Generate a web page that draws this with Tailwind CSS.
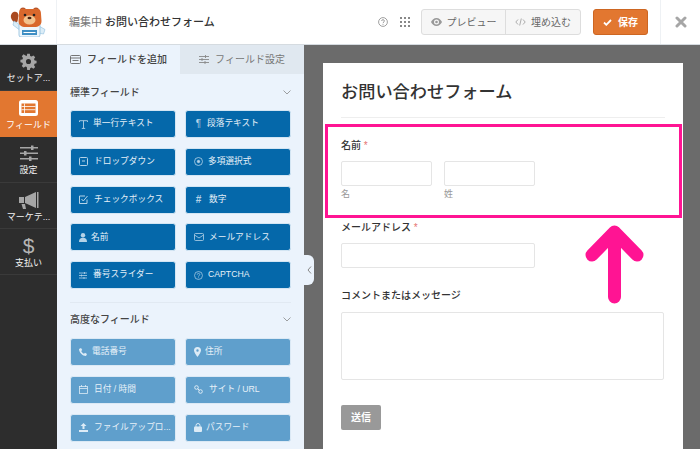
<!DOCTYPE html>
<html lang="ja">
<head>
  <meta charset="UTF-8" />
  <title>お問い合わせフォーム</title>
  <script src="https://cdn.jsdelivr.net/npm/@tailwindcss/browser@4"></script>
</head>
<body class="w-[700px] h-[449px] overflow-hidden relative bg-white font-['Liberation_Sans','Noto_Sans_CJK_JP',sans-serif]">
  <!-- header -->
  <header class="h-[45px] flex items-center bg-white border-b border-[#d5dbe0]">
    <div class="w-[57px] h-full flex items-center justify-center border-r border-[#eef1f4]">
      <svg width="38" height="30" viewBox="0 0 38 30">
        <path d="M3 13c-2.500-4-.5-7 1.500-8 2.500-1 5 .5 5 3.500l-1 6-3 1.500z" fill="#a9491f"/>
        <path d="M5 14l8 5-1 5-8-6z" fill="#dcedf7" stroke="#8dbedd" stroke-width="0.6"/>
        <path d="M30 19l6 3.500-1.500 4.500-5-1z" fill="#dcedf7" stroke="#8dbedd" stroke-width="0.6"/>
        <rect x="10" y="16" width="21" height="14" rx="2" fill="#eef6fb" stroke="#8dbedd" stroke-width="0.8"/>
        <circle cx="14" cy="3.500" r="3" fill="#b8562a"/><circle cx="27" cy="3.500" r="3" fill="#b8562a"/>
        <path d="M12 2h17c2 0 3 2 3 5l.5 7c0 4-3 6-7 6h-9c-4 0-7-2-7-6l.5-7c0-3 .5-5 2-5z" fill="#d9682c"/>
        <ellipse cx="20.500" cy="13" rx="6" ry="4.500" fill="#f3c28d"/>
        <circle cx="16" cy="8" r="1.300" fill="#222"/><circle cx="25" cy="8" r="1.300" fill="#222"/>
        <ellipse cx="20.500" cy="11" rx="2" ry="1.300" fill="#4a2212"/>
        <rect x="13" y="23" width="15" height="5" fill="#3f8fc4"/>
        <path d="M14.500 25.500h12" stroke="#fff" stroke-width="1"/>
      </svg>
    </div>
    <div class="ml-[12px] text-[11px] text-[#777] leading-none">編集中 <span class="text-[#333] font-medium">お問い合わせフォーム</span></div>
    <div class="ml-auto flex items-center h-full">
      <svg class="w-[10px] h-[10px] mr-[12px]" viewBox="0 0 10 10" fill="none" stroke="#888" stroke-width="0.8"><circle cx="5" cy="5" r="4.400"/><path d="M3.600 4c0-1.800 2.800-1.800 2.800 0 0 1-1.400 1-1.400 2.200M5 7.200v.8"/></svg>
      <svg class="w-[10px] h-[10px] mr-[11px]" viewBox="0 0 10 10" fill="#888"><rect x="0" y="0" width="2" height="2"/><rect x="4" y="0" width="2" height="2"/><rect x="8" y="0" width="2" height="2"/><rect x="0" y="4" width="2" height="2"/><rect x="4" y="4" width="2" height="2"/><rect x="8" y="4" width="2" height="2"/><rect x="0" y="8" width="2" height="2"/><rect x="4" y="8" width="2" height="2"/><rect x="8" y="8" width="2" height="2"/></svg>
      <div class="w-[160px] h-[26px] flex bg-[#f6f6f6] border border-[#dddddd] rounded-[3px] text-[10px] text-[#666]">
        <div class="w-[84px] flex items-center justify-center gap-[5px] border-r border-[#dddddd]">
          <svg class="w-[11px] h-[8px]" viewBox="0 0 11 8" fill="#999"><path d="M5.500 0C3 0 1 1.700 0 4c1 2.300 3 4 5.500 4S10 6.300 11 4C10 1.700 8 0 5.500 0zm0 6.500a2.500 2.500 0 1 1 0-5 2.500 2.500 0 0 1 0 5z"/><circle cx="5.500" cy="4" r="1.300"/></svg>
          プレビュー
        </div>
        <div class="flex-1 flex items-center justify-center gap-[5px]">
          <svg class="w-[11px] h-[8px]" viewBox="0 0 11 8" fill="none" stroke="#999" stroke-width="0.8"><path d="M3 1.500L.8 4 3 6.500M8 1.500L10.200 4 8 6.500M6.300.500L4.700 7.500"/></svg>
          埋め込む
        </div>
      </div>
      <div class="ml-[12px] w-[55px] h-[26px] flex items-center justify-center gap-[6px] bg-[#e27730] border border-[#cd6622] rounded-[3px] text-white text-[10px] font-bold">
        <svg class="w-[9px] h-[7px]" viewBox="0 0 9 7" fill="none" stroke="#fff" stroke-width="1.800"><path d="M1 3.500L3.300 5.800 8 1"/></svg>
        保存
      </div>
      <div class="ml-[12px] w-[40px] h-full flex items-center justify-center border-l border-[#eef1f4]">
        <svg class="w-[12px] h-[12px]" viewBox="0 0 12 12" stroke="#a6a6a6" stroke-width="3" stroke-linecap="round"><path d="M2 2l8 8M10 2l-8 8"/></svg>
      </div>
    </div>
  </header>

  <div class="flex h-[404px]">
    <!-- sidebar -->
    <nav class="w-[57px] bg-[#2d2d2d] text-[#f2f2f2] text-[9px] text-center shrink-0">
      <div class="h-[46px] flex flex-col items-center justify-center gap-[4px] pt-[1px] border-b border-[#3a3a3a]">
        <svg class="w-[17px] h-[17px]" viewBox="-1 -1 20 20" fill="#a6a6a6"><path fill-rule="evenodd" d="M7.500 0h3l.5 2.500 1.600.7 2.200-1.400 2.100 2.100-1.400 2.200.7 1.600 2.300.5v3l-2.300.5-.7 1.600 1.400 2.200-2.100 2.100-2.200-1.400-1.600.7-.5 2.400h-3L7 15.600l-1.600-.7-2.200 1.400-2.100-2.100 1.400-2.200-.7-1.600L-.5 10V7l2.300-.5.700-1.600-1.400-2.200 2.100-2.100 2.200 1.400L7 2.500zM9 6a3 3 0 1 0 0 6 3 3 0 0 0 0-6z"/></svg>
        <span class="leading-none">セットア...</span>
      </div>
      <div class="h-[46px] flex flex-col items-center justify-center gap-[5px] pt-[1px] bg-[#e27730] text-white">
        <svg class="w-[19px] h-[16px]" viewBox="0 0 19 16"><rect width="19" height="16" rx="2.500" fill="#fff"/><rect x="2.500" y="3.500" width="14" height="9.500" fill="#e27730"/><path d="M2.500 6.500h14M2.500 9.700h14M5.500 3.500V13" stroke="#fff" stroke-width="0.8"/></svg>
        <span class="leading-none">フィールド</span>
      </div>
      <div class="h-[46px] flex flex-col items-center justify-center gap-[5px] pt-[1px] border-b border-[#3a3a3a]">
        <svg class="w-[18px] h-[16px]" viewBox="0 0 18 16" fill="#a6a6a6"><rect y="2" width="18" height="1.500"/><rect y="7.500" width="18" height="1.500"/><rect y="13" width="18" height="1.500"/><rect x="11" y="0.500" width="2.500" height="4.500"/><rect x="4" y="6" width="2.500" height="4.500"/><rect x="9" y="11.500" width="2.500" height="4.500"/></svg>
        <span class="leading-none">設定</span>
      </div>
      <div class="h-[46px] flex flex-col items-center justify-center gap-[4px] pt-[1px] border-b border-[#3a3a3a]">
        <svg class="w-[20px] h-[18px]" viewBox="0 0 20 18" fill="#a6a6a6"><path d="M0 6h5v6H0zM6 6l11-5v16L6 12zM18 1h1.500v16H18zM2.500 13H6l1 5H4z"/></svg>
        <span class="leading-none">マーケテ...</span>
      </div>
      <div class="h-[46px] flex flex-col items-center justify-center gap-[4px] pt-[1px] border-b border-[#3a3a3a]">
        <span class="text-[21px] leading-[19px] text-[#b5b5b5]">$</span>
        <span class="leading-none">支払い</span>
      </div>
    </nav>

    <!-- fields panel -->
    <aside class="w-[247px] shrink-0 bg-[#ebf3fc] flex flex-col">
      <div class="h-[29px] flex text-[10px] leading-none shrink-0">
        <div class="w-[123px] flex items-center justify-center gap-[6px] text-[#444] font-medium">
          <svg class="w-[11px] h-[9px]" viewBox="0 0 11 9" fill="none" stroke="#666" stroke-width="0.9"><rect x=".5" y=".5" width="10" height="8" rx="1"/><path d="M.5 3h10M2.500 5.500h6"/></svg>
          フィールドを追加
        </div>
        <div class="flex-1 flex items-center justify-center gap-[6px] bg-[#e0e8f0] text-[#777]">
          <svg class="w-[10px] h-[9px]" viewBox="0 0 10 9" fill="none" stroke="#888" stroke-width="0.9"><path d="M0 1.500h10M0 4.500h10M0 7.500h10M6.500 0v3M3 3v3M6 6v3"/></svg>
          フィールド設定
        </div>
      </div>

      <div class="flex items-center justify-between pl-[13px] pr-[13px] h-[36px] text-[10px] font-medium text-[#444]">
        <span>標準フィールド</span>
        <svg class="w-[8px] h-[5px]" viewBox="0 0 8 5" fill="none" stroke="#888" stroke-width="0.8"><path d="M.5.500L4 4 7.500.500"/></svg>
      </div>
      <div class="grid grid-cols-[106px_106px] gap-x-[9px] gap-y-[9.75px] px-[13px] text-[8.7px] text-[#e6f0f8] whitespace-nowrap">
        <div class="h-[28px] flex items-center gap-[5px] pl-[8px] bg-[#0568aa] border border-[#d3e5f3] rounded-[3px]"><svg class="w-[9px] h-[9px] shrink-0" viewBox="0 0 9 9" fill="none" stroke="#b5d3e8" stroke-width="0.9"><path d="M.5 2V.7h8V2M4.500.7v7.600M2.800 8.400h3.400"/></svg>単一行テキスト</div>
        <div class="h-[28px] flex items-center gap-[4px] pl-[8px] bg-[#0568aa] border border-[#d3e5f3] rounded-[3px]"><span class="w-[9px] text-center text-[10px] leading-none text-[#b5d3e8]">¶</span>段落テキスト</div>
        <div class="h-[28px] flex items-center gap-[6px] pl-[8px] bg-[#0568aa] border border-[#d3e5f3] rounded-[3px]"><svg class="w-[9px] h-[9px] shrink-0" viewBox="0 0 9 9" fill="none" stroke="#b5d3e8"><rect x=".5" y=".5" width="8" height="8" rx="1"/><path d="M3 4h3"/></svg>ドロップダウン</div>
        <div class="h-[28px] flex items-center gap-[5px] pl-[8px] bg-[#0568aa] border border-[#d3e5f3] rounded-[3px]"><svg class="w-[9px] h-[9px] shrink-0" viewBox="0 0 9 9" fill="none" stroke="#b5d3e8" stroke-width="0.8"><circle cx="4.500" cy="4.500" r="4"/><circle cx="4.500" cy="4.500" r="1.200" fill="#b5d3e8"/></svg>多項選択式</div>
        <div class="h-[28px] flex items-center gap-[6px] pl-[8px] bg-[#0568aa] border border-[#d3e5f3] rounded-[3px]"><svg class="w-[9px] h-[9px] shrink-0" viewBox="0 0 9 9" fill="none" stroke="#b5d3e8"><path d="M8 4.500V8.500H.5V1H6"/><path d="M2.500 4L4.300 6 8.500 1"/></svg>チェックボックス</div>
        <div class="h-[28px] flex items-center gap-[6px] pl-[8px] bg-[#0568aa] border border-[#d3e5f3] rounded-[3px]"><span class="w-[9px] text-center text-[10px] font-bold leading-none text-[#b5d3e8]">#</span>数字</div>
        <div class="h-[28px] flex items-center gap-[4px] pl-[8px] bg-[#0568aa] border border-[#d3e5f3] rounded-[3px]"><svg class="w-[8px] h-[9px] shrink-0" viewBox="0 0 8 9" fill="#b5d3e8"><circle cx="4" cy="2.200" r="2.200"/><path d="M0 9c0-3 1.500-4.300 4-4.300S8 6 8 9z"/></svg>名前</div>
        <div class="h-[28px] flex items-center gap-[5px] pl-[8px] bg-[#0568aa] border border-[#d3e5f3] rounded-[3px]"><svg class="w-[10px] h-[8px] shrink-0" viewBox="0 0 10 8" fill="none" stroke="#b5d3e8" stroke-width="0.8"><rect x=".5" y=".5" width="9" height="7" rx="1"/><path d="M.5 2L5 5 9.500 2"/></svg>メールアドレス</div>
        <div class="h-[28px] flex items-center gap-[6px] pl-[8px] bg-[#0568aa] border border-[#d3e5f3] rounded-[3px]"><svg class="w-[8px] h-[7px] shrink-0" viewBox="0 0 8 7" fill="none" stroke="#b5d3e8" stroke-width="0.8"><path d="M0 1h8M0 3.500h8M0 6h8M5.500 0v2M2.500 2.500v2M5 5v2"/></svg>番号スライダー</div>
        <div class="h-[28px] flex items-center gap-[5px] pl-[8px] bg-[#0568aa] border border-[#d3e5f3] rounded-[3px]"><svg class="w-[9px] h-[9px] shrink-0" viewBox="0 0 10 10" fill="none" stroke="#b5d3e8" stroke-width="0.8"><circle cx="5" cy="5" r="4.400"/><path d="M3.600 4c0-1.800 2.800-1.800 2.800 0 0 1-1.400 1-1.400 2.200M5 7.200v.8"/></svg>CAPTCHA</div>
      </div>

      <div class="mx-[13px] mt-[13px] border-t border-[#e1e9f2]"></div>

      <div class="flex items-center justify-between pl-[13px] pr-[13px] pb-[3px] h-[35px] text-[10px] font-medium text-[#444]">
        <span>高度なフィールド</span>
        <svg class="w-[8px] h-[5px]" viewBox="0 0 8 5" fill="none" stroke="#888" stroke-width="0.8"><path d="M.5.500L4 4 7.500.500"/></svg>
      </div>
      <div class="grid grid-cols-[106px_106px] gap-x-[9px] gap-y-[9.75px] px-[13px] text-[8.7px] text-[#e6f0f8] whitespace-nowrap">
        <div class="h-[28px] flex items-center gap-[5px] pl-[8px] bg-[#5f9fcc] border border-[#dbe9f5] rounded-[3px]"><svg class="w-[8px] h-[8px] shrink-0" viewBox="0 0 8 8" fill="#dcebf6"><path d="M0 1l2-1 1.300 2L2.200 3c.5 1.200 1.300 2 2.800 2.800L6 4.700 8 6 7 8C3.500 8 0 4.500 0 1z"/></svg>電話番号</div>
        <div class="h-[28px] flex items-center gap-[4px] pl-[8px] bg-[#5f9fcc] border border-[#dbe9f5] rounded-[3px]"><svg class="w-[7px] h-[10px] shrink-0" viewBox="0 0 7 10" fill="#dcebf6"><path fill-rule="evenodd" d="M3.500 0a3.500 3.500 0 0 1 3.500 3.500C7 5.500 3.500 10 3.500 10S0 5.500 0 3.500A3.500 3.500 0 0 1 3.500 0zm0 2.300a1.200 1.200 0 1 0 0 2.400 1.200 1.200 0 0 0 0-2.400z"/></svg>住所</div>
        <div class="h-[28px] flex items-center gap-[6px] pl-[8px] bg-[#5f9fcc] border border-[#dbe9f5] rounded-[3px]"><svg class="w-[9px] h-[9px] shrink-0" viewBox="0 0 9 9" fill="none" stroke="#dcebf6" stroke-width="0.8"><rect x=".5" y="1.500" width="8" height="7"/><path d="M.5 3.500h8M2.500 0v2M6.500 0v2"/></svg>日付 / 時間</div>
        <div class="h-[28px] flex items-center gap-[6px] pl-[8px] bg-[#5f9fcc] border border-[#dbe9f5] rounded-[3px]"><svg class="w-[9px] h-[9px] shrink-0" viewBox="0 0 9 9" fill="none" stroke="#dcebf6"><circle cx="2.500" cy="2.500" r="1.800"/><circle cx="6.500" cy="6.500" r="1.800"/><path d="M3.500 3.500l2 2"/></svg>サイト / URL</div>
        <div class="h-[28px] flex items-center gap-[6px] pl-[8px] bg-[#5f9fcc] border border-[#dbe9f5] rounded-[3px]"><svg class="w-[9px] h-[9px] shrink-0" viewBox="0 0 9 9" fill="#dcebf6"><path d="M4.500 0L7.500 3H5.500V6H3.500V3H1.500zM0 7h9v2H0z"/></svg>ファイルアップロ...</div>
        <div class="h-[28px] flex items-center gap-[4px] pl-[8px] bg-[#5f9fcc] border border-[#dbe9f5] rounded-[3px]"><svg class="w-[8px] h-[9px] shrink-0" viewBox="0 0 8 9" fill="#dcebf6"><rect y="3.500" width="8" height="5.500" rx="1"/><path d="M2 4V2.500a2 2 0 0 1 4 0V4" fill="none" stroke="#dcebf6"/></svg>パスワード</div>
      </div>
    </aside>

    <!-- form preview -->
    <main class="flex-1 bg-[#6b6b6b] pl-[19px] pr-[17px] pt-[18px]">
      <div class="h-[386px] bg-white px-[18px]">
        <h1 class="pt-[16px] text-[17.2px] leading-[22px] font-medium text-[#333] translate-y-[2px]">お問い合わせフォーム</h1>
        <div class="mt-[16px] border-t border-[#eeeeee]"></div>

        <div class="mt-[21px] text-[10px] leading-[14px] font-medium text-[#333]">名前 <span class="text-[#e57373] font-normal">*</span></div>
        <div class="mt-[8px] flex gap-[12px]">
          <div class="w-[91px]">
            <div class="h-[25px] border border-[#e5e5e5] rounded-[2px]"></div>
            <div class="mt-[2px] text-[9px] leading-[12px] text-[#999]">名</div>
          </div>
          <div class="w-[91px]">
            <div class="h-[25px] border border-[#e5e5e5] rounded-[2px]"></div>
            <div class="mt-[2px] text-[9px] leading-[12px] text-[#999]">姓</div>
          </div>
        </div>

        <div class="mt-[21px] text-[10px] leading-[14px] font-medium text-[#333]">メールアドレス <span class="text-[#e57373] font-normal">*</span></div>
        <div class="mt-[8px] w-[194px] h-[25px] border border-[#e5e5e5] rounded-[2px]"></div>

        <div class="mt-[21px] text-[10px] leading-[14px] font-medium text-[#333]">コメントまたはメッセージ</div>
        <div class="mt-[9px] w-[323px] h-[68px] border border-[#e5e5e5] rounded-[2px]"></div>

        <div class="mt-[25px] w-[40px] h-[25px] flex items-center justify-center bg-[#999999] rounded-[2px] text-white text-[10px] font-bold">送信</div>
      </div>
    </main>
  </div>

  <!-- panel collapse tab -->
  <div class="absolute left-[304px] top-[255px] w-[10px] h-[30px] bg-[#ebf3fc] rounded-r-[6px] flex items-center justify-center">
    <svg class="w-[5px] h-[8px]" viewBox="0 0 5 8" fill="none" stroke="#888"><path d="M4 .5L1 4l3 3.500"/></svg>
  </div>

  <!-- annotation -->
  <div class="absolute left-[325px] top-[124px] w-[357px] h-[94px] border-[3px] border-[#ff1493]"></div>
  <svg class="absolute left-[582px] top-[223px]" width="64" height="82" viewBox="0 0 64 82" fill="none" stroke="#ff1493" stroke-width="13" stroke-linecap="round" stroke-linejoin="round"><path d="M32.500 74V9M10 32L32.500 9 55 32"/></svg>
</body>
</html>
